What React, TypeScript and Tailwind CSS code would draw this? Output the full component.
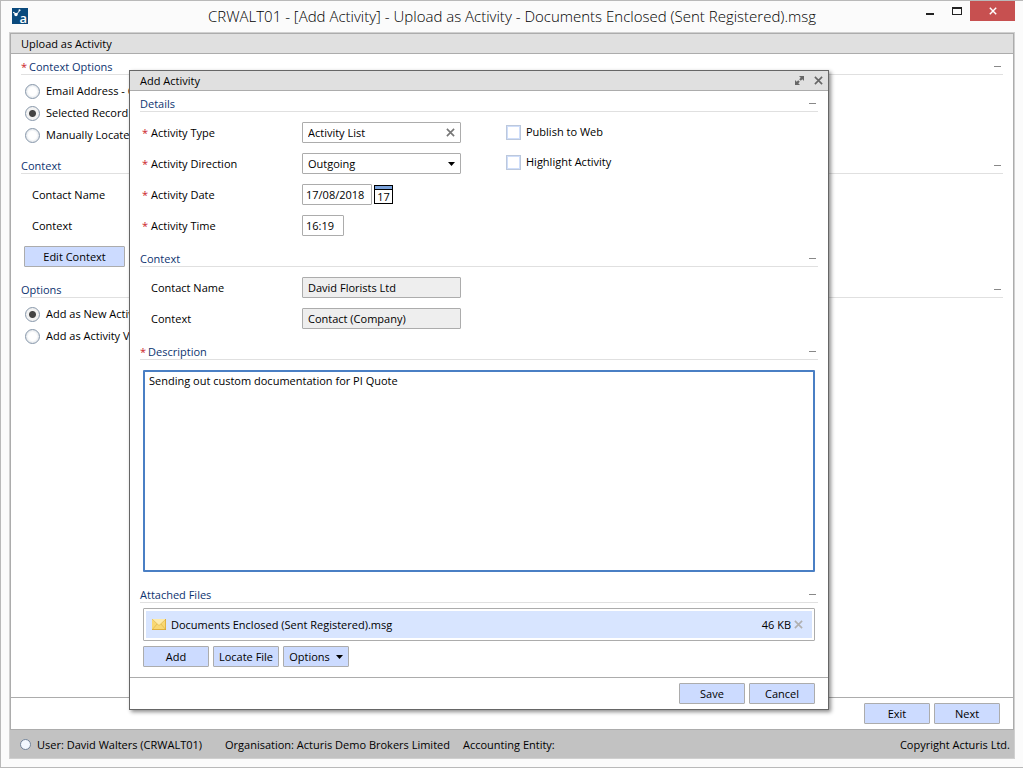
import { useState, type ReactNode } from "react";

const CloseIcon = ({ className }: { className: string }) => (
  <svg viewBox="0 0 10 10" className={className} fill="none" stroke="currentColor" strokeWidth="1.8" aria-hidden="true">
    <path d="M1 1l8 8M9 1l-8 8" />
  </svg>
);

const CaretIcon = () => (
  <svg viewBox="0 0 7 4" className="h-1 w-[7px] fill-black" aria-hidden="true">
    <path d="M0 0h7L3.5 4z" />
  </svg>
);

const LogoIcon = () => (
  <svg viewBox="0 0 16 16" className="ml-[3px] size-4" aria-hidden="true">
    <rect width="16" height="16" fill="#0a4a7d" />
    <path d="M1.500 4.500L4.500 6.500L8 2" fill="none" stroke="#fff" strokeWidth="1" />
    <circle cx="4" cy="6.500" r="1.700" fill="#fff" />
    <circle cx="1.800" cy="4.500" r="0.800" fill="#fff" />
    <circle cx="7.500" cy="2.200" r="1" fill="#fff" />
    <text x="7.500" y="14.500" fill="#fff" fontSize="13" fontWeight="600" fontFamily="Open Sans, sans-serif">
      a
    </text>
  </svg>
);

const MailIcon = () => (
  <svg viewBox="0 0 14 11" className="h-[11px] w-[14px] shrink-0" aria-hidden="true">
    <rect width="14" height="11" rx="0.500" fill="#f8d873" />
    <path d="M0 0h14L7 6.500z" fill="#fdebac" />
    <path d="M0 0l7 6.500L14 0M0 11l5-6M14 11L9 5" fill="none" stroke="#dcb045" strokeWidth="0.600" />
    <path d="M0 10.500h14M13.600 0v11" stroke="#d9a530" strokeWidth="0.800" />
  </svg>
);

const ExpandIcon = () => (
  <svg viewBox="0 0 9 9" className="size-[9px] fill-[#666]" aria-hidden="true">
    <path d="M4 0h5v5L7.300 3.300L5.800 4.800L4.200 3.200L5.700 1.700zM5 9H0V4l1.700 1.700L3.200 4.200l1.600 1.600l-1.500 1.500z" />
  </svg>
);

const Section = ({ title, required, children }: { title: string; required?: boolean; children: ReactNode }) => {
  const [open, setOpen] = useState(true);
  return (
    <section>
      <div className="flex h-4 items-center justify-between border-b border-[#e0e0e0]">
        <h2 className="text-[#0d3470]">
          {required && <span className="mr-[2px] text-[#cc2229]">*</span>}
          {title}
        </h2>
        <button type="button" aria-label={`Toggle ${title}`} onClick={() => setOpen(!open)} className="flex h-3 w-[9px] items-center">
          <span className="h-px w-[7px] bg-[#888]" />
        </button>
      </div>
      {open && children}
    </section>
  );
};

const Button = ({ className = "w-[66px]", children }: { className?: string; children: ReactNode }) => (
  <button
    type="button"
    className={`flex h-[21px] shrink-0 items-center justify-center gap-[6px] rounded-[1px] border border-[#acacac] bg-[#ccdbff] ${className}`}
  >
    {children}
  </button>
);

const Radio = ({ name, label, checked }: { name: string; label: string; checked?: boolean }) => (
  <label className="flex h-[22px] items-center gap-[6px] whitespace-nowrap">
    <input
      type="radio"
      name={name}
      defaultChecked={checked}
      className="size-[15px] shrink-0 appearance-none rounded-full border border-[#8797aa] bg-white bg-[radial-gradient(circle,#fff_4px,#e9ecef_6px)] checked:bg-[radial-gradient(circle,#444_3px,#f2f2f2_4px)]"
    />
    {label}
  </label>
);

const Field = ({ id, label, required, children }: { id: string; label: string; required?: boolean; children: ReactNode }) => (
  <div className="flex h-[31px] items-center">
    <label htmlFor={id} className="flex w-[162px] shrink-0">
      <span className="w-[11px] shrink-0 pl-[2px] text-[#cc2229]">{required && "*"}</span>
      {label}
    </label>
    {children}
  </div>
);

const Checkbox = ({ label }: { label: string }) => (
  <label className="flex h-[30px] items-center gap-[5px]">
    <input
      type="checkbox"
      className="size-[15px] appearance-none border border-[#bcc8dc] bg-white shadow-[inset_0_0_0_1px_#cfdefa] checked:bg-[#7ba3dc]"
    />
    {label}
  </label>
);

const input = "h-[21px] rounded-[1px] border border-[#acacac]";

const AddActivityDialog = () => (
  <div
    role="dialog"
    aria-label="Add Activity"
    className="absolute left-[128px] right-[194px] top-[69px] border border-[#666] bg-white shadow-[2px_2px_4px_rgba(0,0,0,0.45)]"
  >
    <header className="flex h-5 items-center justify-between border-b border-[#acacac] bg-[#e0e0e0] pl-[10px] pr-[5px]">
      <h1>Add Activity</h1>
      <div className="flex items-center gap-[10px] text-[#666]">
        <button type="button" aria-label="Maximise">
          <ExpandIcon />
        </button>
        <button type="button" aria-label="Close">
          <CloseIcon className="size-[9px]" />
        </button>
      </div>
    </header>

    <div className="flex flex-col px-[10px] pt-[5px]">
      <Section title="Details">
        <div className="flex pb-[10px] pt-[5px]">
          <div className="w-[366px]">
            <Field id="type" label="Activity Type" required>
              <div className={`flex w-[159px] items-center bg-white px-[5px] ${input}`}>
                <input id="type" defaultValue="Activity List" className="w-0 grow outline-none" />
                <button type="button" aria-label="Clear" className="text-[#777]">
                  <CloseIcon className="size-[9px]" />
                </button>
              </div>
            </Field>
            <Field id="direction" label="Activity Direction" required>
              <div className="relative">
                <select id="direction" className={`w-[159px] appearance-none bg-white pl-[5px] ${input}`}>
                  <option>Outgoing</option>
                  <option>Incoming</option>
                </select>
                <span className="pointer-events-none absolute right-[6px] top-[9px]">
                  <CaretIcon />
                </span>
              </div>
            </Field>
            <Field id="date" label="Activity Date" required>
              <input id="date" defaultValue="17/08/2018" className={`w-[70px] bg-white px-[3px] ${input}`} />
              <button
                type="button"
                aria-label="Open calendar"
                className="ml-[2px] h-[19px] w-[19px] border border-black bg-white bg-[linear-gradient(#7ba3dc_3px,#000_3px,#000_4px,#fff_4px)] pt-[4px] text-center leading-[14px]"
              >
                17
              </button>
            </Field>
            <Field id="time" label="Activity Time" required>
              <input id="time" defaultValue="16:19" className={`w-[42px] bg-white px-[3px] ${input}`} />
            </Field>
          </div>
          <div>
            <Checkbox label="Publish to Web" />
            <Checkbox label="Highlight Activity" />
          </div>
        </div>
      </Section>

      <Section title="Context">
        <div className="pb-[10px] pt-[5px]">
          <Field id="contact" label="Contact Name">
            <input id="contact" readOnly defaultValue="David Florists Ltd" className={`w-[159px] bg-[#eee] px-[5px] ${input}`} />
          </Field>
          <Field id="context" label="Context">
            <input id="context" readOnly defaultValue="Contact (Company)" className={`w-[159px] bg-[#eee] px-[5px] ${input}`} />
          </Field>
        </div>
      </Section>

      <Section title="Description" required>
        <div className="flex px-[3px] pb-[15px] pt-[10px]">
          <textarea
            aria-label="Description"
            defaultValue="Sending out custom documentation for PI Quote"
            className="h-[202px] w-full resize-none rounded-[1px] border-2 border-[#4a7fc4] bg-white px-1 py-px outline-none"
          />
        </div>
      </Section>

      <Section title="Attached Files">
        <div className="px-[3px] pb-[10px] pt-[5px]">
          <div className="rounded-[1px] border border-[#acacac] p-[2px]">
            <div className="flex h-[27px] items-center bg-[#d8e5ff] pl-[6px] pr-[9px]">
              <MailIcon />
              <span className="ml-[5px] grow">Documents Enclosed (Sent Registered).msg</span>
              <span>46 KB</span>
              <button type="button" aria-label="Remove file" className="ml-[3px] text-[#b0b0b0]">
                <CloseIcon className="size-[9px]" />
              </button>
            </div>
          </div>
          <div className="mt-[5px] flex gap-1">
            <Button>Add</Button>
            <Button>Locate File</Button>
            <Button>
              Options <CaretIcon />
            </Button>
          </div>
        </div>
      </Section>
    </div>

    <footer className="flex justify-end gap-1 border-t border-[#acacac] px-[13px] py-[5px]">
      <Button>Save</Button>
      <Button>Cancel</Button>
    </footer>
  </div>
);

const App = () => (
  <div className="relative flex min-h-screen flex-col border-y border-l border-[#b9b9b9] bg-[#fbfbfb] px-2 pb-2 font-['Open_Sans','Noto_Sans',sans-serif] text-[11px] leading-4 text-black">
    <header className="grid h-[31px] grid-cols-[1fr_auto_1fr] items-center pb-px">
      <LogoIcon />
      <div className="text-[15px] font-light leading-5 text-black">
        CRWALT01 - [Add Activity] - Upload as Activity - Documents Enclosed (Sent Registered).msg
      </div>
      <div className="flex gap-2 self-start justify-self-end">
        <button type="button" aria-label="Minimise" className="mr-[10px] flex h-5 items-center">
          <span className="mt-[6px] h-[2px] w-2 bg-[#222]" />
        </button>
        <button type="button" aria-label="Maximise" className="flex h-5 items-center">
          <span className="h-2 w-[10px] border border-t-2 border-[#222]" />
        </button>
        <button type="button" aria-label="Close window" className="flex h-5 w-[45px] items-center justify-center bg-[#c75050] text-white">
          <CloseIcon className="size-2" />
        </button>
      </div>
    </header>

    <div className="flex grow flex-col border border-[#d0d0d0]">
      <main className="flex grow flex-col border border-[#acacac] bg-white">
        <div className="h-5 border-b border-[#acacac] bg-[#e0e0e0] px-[10px] leading-5">Upload as Activity</div>
        <div className="flex grow flex-col px-[10px] pt-[5px]">
          <Section title="Context Options" required>
            <div className="pb-3 pl-1 pt-[5px]">
              <Radio name="source" label="Email Address - C" />
              <Radio name="source" label="Selected Record -" checked />
              <Radio name="source" label="Manually Locate C" />
            </div>
          </Section>
          <Section title="Context">
            <div className="pb-[5px] pl-[11px] pt-[5px]">
              <p className="leading-[31px]">Contact Name</p>
              <p className="leading-[31px]">Context</p>
            </div>
            <div className="px-[3px] pb-[15px]">
              <Button className="w-[101px]">Edit Context</Button>
            </div>
          </Section>
          <Section title="Options">
            <div className="pl-1 pt-[5px]">
              <Radio name="mode" label="Add as New Activity" checked />
              <Radio name="mode" label="Add as Activity Ve" />
            </div>
          </Section>
        </div>
        <div className="flex justify-end gap-1 border-t border-[#acacac] px-[13px] py-[5px]">
          <Button>Exit</Button>
          <Button>Next</Button>
        </div>
      </main>
      <footer className="flex h-7 items-center bg-[#c2c2c2] pl-[10px] pr-1 pt-px">
        <span className="mr-[6px] size-[11px] rounded-full border border-[#71839a] bg-[#f2f8ff]" />
        <span className="w-[188px]">User: David Walters (CRWALT01)</span>
        <span className="w-[238px]">Organisation: Acturis Demo Brokers Limited</span>
        <span className="grow">Accounting Entity:</span>
        <span>Copyright Acturis Ltd.</span>
      </footer>
    </div>

    <AddActivityDialog />
  </div>
);

export default App;
